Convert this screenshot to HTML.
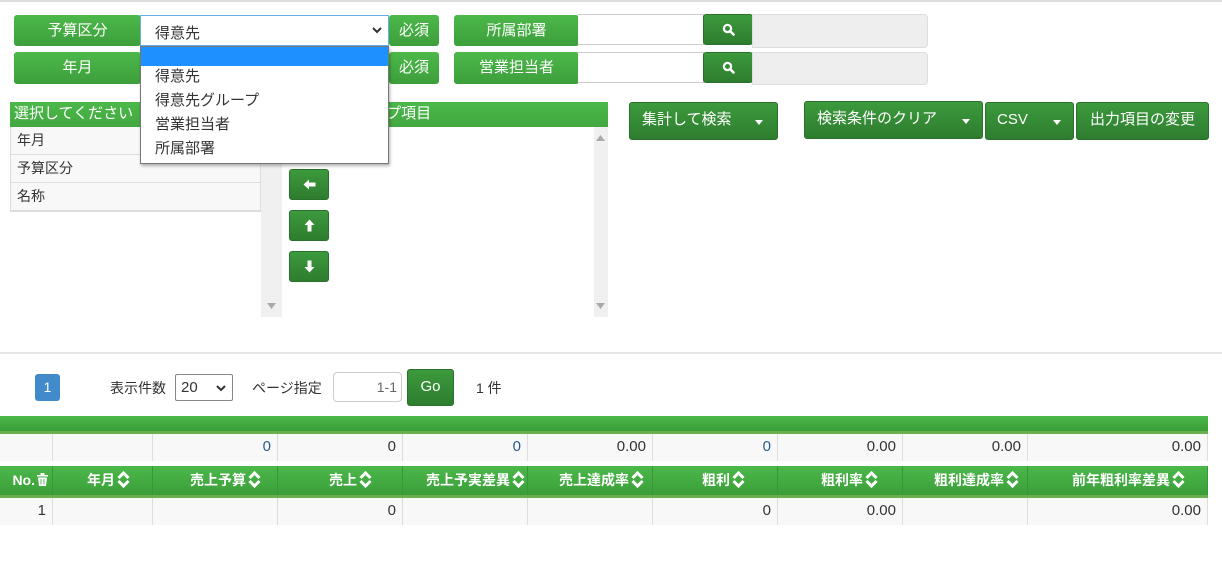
<!DOCTYPE html>
<html><head><meta charset="utf-8"><style>
*{box-sizing:border-box;margin:0;padding:0}
body{width:1222px;height:585px;background:#fff;font-family:"Liberation Sans","Noto Sans CJK JP",sans-serif;font-size:14px;color:#333;position:relative;overflow:hidden}
.a{position:absolute}
.g{background:linear-gradient(#4cb84a,#3d9f3b);color:#fff;text-align:center;border-radius:3px}
.b{background:linear-gradient(#3c9a3c,#2e7d2f);color:#fff;border-radius:3px;border:1px solid #2b702c}
.car{display:inline-block;width:0;height:0;border-left:4px solid transparent;border-right:4px solid transparent;border-top:5px solid #fff;vertical-align:middle}
.th{background:linear-gradient(#4cb84a,#3b9e39);border-bottom:3px solid #6aaf4c}
.cell{position:absolute;top:0;height:100%;border-right:1px solid #ddd;text-align:right;padding-right:6px}
.hc{position:absolute;top:0;height:100%;border-right:1px solid #3a963a;color:#fff;font-weight:bold;text-align:right;padding-right:22px;font-size:14px}
.sort{display:inline-block;vertical-align:middle;margin-left:2px;margin-top:-3px}
.b svg,.dd svg{display:block}
</style></head><body>
<div class="a" style="left:0;top:0;width:1222px;height:2px;background:#ddd"></div>

<div class="a g" style="left:14px;top:15px;width:127px;height:31px;line-height:31px;font-size:15px">予算区分</div>
<div class="a" style="left:140px;top:15px;width:249px;height:31px;border:1px solid #66afe9;background:#fff;padding:6px 14px;font-size:15px">得意先<svg style="position:absolute;right:6px;top:11px" width="10" height="7" viewBox="0 0 10 7"><path d="M1 1L5 5L9 1" stroke="#333" stroke-width="2" fill="none"/></svg></div>
<div class="a g" style="left:389px;top:15px;width:50px;height:31px;line-height:31px;font-size:15px">必須</div>
<div class="a g" style="left:14px;top:52px;width:127px;height:32px;line-height:32px;font-size:15px">年月</div>
<div class="a g" style="left:389px;top:52px;width:50px;height:32px;line-height:32px;font-size:15px">必須</div>

<div class="a g" style="left:454px;top:15px;width:125px;height:31px;line-height:31px;font-size:15px">所属部署</div>
<div class="a" style="left:578px;top:14px;width:126px;height:31px;border:1px solid #ccc;border-left:none;background:#fff"></div>
<div class="a b" style="left:703px;top:14px;width:50px;height:31px"><svg style="margin:8px auto 0" width="13" height="13" viewBox="0 0 13 13"><circle cx="5.5" cy="5.5" r="3.6" stroke="#fff" stroke-width="2.2" fill="none"/><path d="M8 8L11.5 11.5" stroke="#fff" stroke-width="2.6" stroke-linecap="round"/></svg></div>
<div class="a" style="left:752px;top:14px;width:176px;height:34px;background:#eee;border:1px solid #ddd;border-radius:0 4px 4px 0"></div>
<div class="a g" style="left:454px;top:52px;width:125px;height:32px;line-height:32px;font-size:15px">営業担当者</div>
<div class="a" style="left:578px;top:52px;width:126px;height:31px;border:1px solid #ccc;border-left:none;background:#fff"></div>
<div class="a b" style="left:703px;top:52px;width:50px;height:31px"><svg style="margin:8px auto 0" width="13" height="13" viewBox="0 0 13 13"><circle cx="5.5" cy="5.5" r="3.6" stroke="#fff" stroke-width="2.2" fill="none"/><path d="M8 8L11.5 11.5" stroke="#fff" stroke-width="2.6" stroke-linecap="round"/></svg></div>
<div class="a" style="left:752px;top:52px;width:176px;height:33px;background:#eee;border:1px solid #ddd;border-radius:0 4px 4px 0"></div>

<!-- panel -->
<div class="a" style="left:10px;top:102px;width:598px;height:25px;background:linear-gradient(#4cb84a,#42a840);color:#fff;font-size:15px;line-height:24px;padding-left:4px">選択してください<span style="position:absolute;left:332px">グループ項目</span></div>
<div class="a" style="left:10px;top:127px;width:251px;height:85px;border:1px solid #ddd;border-top:none;border-bottom:2px solid #ddd;background:#f8f8f8">
<div style="height:28px;line-height:26px;padding-left:6px;border-bottom:1px solid #ddd">年月</div>
<div style="height:28px;line-height:26px;padding-left:6px;border-bottom:1px solid #ddd">予算区分</div>
<div style="height:27px;line-height:26px;padding-left:6px">名称</div></div>
<div class="a" style="left:261px;top:127px;width:21px;height:190px;background:#f0f0f0"><svg style="position:absolute;bottom:8px;left:6px" width="9" height="6"><path d="M0 0H9L4.5 6Z" fill="#aaa"/></svg></div>
<div class="a" style="left:594px;top:127px;width:14px;height:190px;background:#f0f0f0"><svg style="position:absolute;top:8px;left:2px" width="9" height="6"><path d="M0 6H9L4.5 0Z" fill="#aaa"/></svg><svg style="position:absolute;bottom:8px;left:2px" width="9" height="6"><path d="M0 0H9L4.5 6Z" fill="#aaa"/></svg></div>
<div class="a b" style="left:289px;top:169px;width:40px;height:31px"><svg style="margin:9px auto 0" width="13" height="11" viewBox="0 0 13 11"><path d="M0.5 5.5L6 0.5V3.5H12.5V7.5H6V10.5Z" fill="#fff"/></svg></div>
<div class="a b" style="left:289px;top:210px;width:40px;height:31px"><svg style="margin:8px auto 0" width="11" height="13" viewBox="0 0 11 13"><path d="M5.5 0.5L10.5 6H7.5V12.5H3.5V6H0.5Z" fill="#fff"/></svg></div>
<div class="a b" style="left:289px;top:251px;width:40px;height:31px"><svg style="margin:8px auto 0" width="11" height="13" viewBox="0 0 11 13"><path d="M5.5 12.5L10.5 7H7.5V0.5H3.5V7H0.5Z" fill="#fff"/></svg></div>

<!-- dropdown -->
<div class="a" style="left:140px;top:46px;width:249px;height:118px;background:#fff;border:1px solid #777;box-shadow:1px 2px 3px rgba(0,0,0,.3);font-size:15px">
<div style="height:19px;background:#1e90ff"></div>
<div style="padding-left:14px;line-height:24px;margin-top:-1px">得意先<br>得意先グループ<br>営業担当者<br>所属部署</div></div>

<!-- buttons -->
<div class="a b" style="left:629px;top:102px;width:149px;height:38px;line-height:34px;padding-left:12px;font-size:15px">集計して検索<span class="car" style="position:absolute;right:14px;top:17px"></span></div>
<div class="a b" style="left:804px;top:101px;width:179px;height:38px;line-height:34px;padding-left:12px;font-size:15px">検索条件のクリア<span class="car" style="position:absolute;right:12px;top:17px"></span></div>
<div class="a b" style="left:985px;top:102px;width:89px;height:38px;line-height:34px;padding-left:11px;font-size:15px">CSV<span class="car" style="position:absolute;right:12px;top:17px"></span></div>
<div class="a b" style="left:1076px;top:102px;width:133px;height:38px;line-height:34px;text-align:center;font-size:15px">出力項目の変更</div>

<div class="a" style="left:0;top:352px;width:1222px;height:2px;background:#e5e5e5"></div>

<div class="a" style="left:35px;top:374px;width:25px;height:27px;background:#428bca;border-radius:3px;color:#fff;text-align:center;line-height:26px">1</div>
<div class="a" style="left:110px;top:378px">表示件数</div>
<div class="a" style="left:175px;top:374px;width:58px;height:27px;border:1px solid #888;border-radius:2px;padding:4px 5px;font-size:15px">20<svg style="position:absolute;right:6px;top:10px" width="10" height="7" viewBox="0 0 10 7"><path d="M1 1L5 5L9 1" stroke="#333" stroke-width="2" fill="none"/></svg></div>
<div class="a" style="left:252px;top:378px">ページ指定</div>
<div class="a" style="left:333px;top:372px;width:69px;height:30px;border:1px solid #ccc;border-radius:4px;text-align:right;padding-right:4px;line-height:28px;color:#666">1-1</div>
<div class="a b" style="left:407px;top:369px;width:47px;height:37px;text-align:center;line-height:34px;font-size:15px">Go</div>
<div class="a" style="left:476px;top:378px">1 件</div>

<!-- table1 -->
<div class="a th" style="left:0;top:416px;width:1208px;height:18px"></div>
<div class="a" style="left:0;top:434px;width:1208px;height:27px;background:#f8f8f8;line-height:26px;font-size:15px">
<div class="cell" style="left:0;width:53px"></div><div class="cell" style="left:53px;width:100px"></div>
<div class="cell" style="left:153px;width:125px;color:#2a5b8c">0</div><div class="cell" style="left:278px;width:125px">0</div>
<div class="cell" style="left:403px;width:125px;color:#2a5b8c">0</div><div class="cell" style="left:528px;width:125px">0.00</div>
<div class="cell" style="left:653px;width:125px;color:#2a5b8c">0</div><div class="cell" style="left:778px;width:125px">0.00</div>
<div class="cell" style="left:903px;width:125px">0.00</div><div class="cell" style="left:1028px;width:180px">0.00</div></div>

<!-- table2 -->
<div class="a th" style="left:0;top:466px;width:1208px;height:32px;line-height:29px">
<div class="hc" style="left:0;width:53px;padding-right:4px">No.<svg class="sort" width="11" height="13" viewBox="0 0 11 13"><path d="M0 2H11V3.5H0Z M3.5 0H7.5V2H3.5Z M1 4.5H10L9 13H2Z" fill="#fff"/><path d="M4 6V11.5M7 6V11.5" stroke="#3d9f3b" stroke-width="0.8"/></svg></div>
<div class="hc" style="left:53px;width:100px">年月<svg class="sort" width="13" height="17" viewBox="0 0 13 17"><path d="M1.5 7L6.5 2L11.5 7M1.5 10L6.5 15L11.5 10" stroke="#fff" stroke-width="3" fill="none"/></svg></div>
<div class="hc" style="left:153px;width:125px;padding-right:16px">売上予算<svg class="sort" width="13" height="17" viewBox="0 0 13 17"><path d="M1.5 7L6.5 2L11.5 7M1.5 10L6.5 15L11.5 10" stroke="#fff" stroke-width="3" fill="none"/></svg></div>
<div class="hc" style="left:278px;width:125px;padding-right:30px">売上<svg class="sort" width="13" height="17" viewBox="0 0 13 17"><path d="M1.5 7L6.5 2L11.5 7M1.5 10L6.5 15L11.5 10" stroke="#fff" stroke-width="3" fill="none"/></svg></div>
<div class="hc" style="left:403px;width:125px;padding-right:2px">売上予実差異<svg class="sort" width="13" height="17" viewBox="0 0 13 17"><path d="M1.5 7L6.5 2L11.5 7M1.5 10L6.5 15L11.5 10" stroke="#fff" stroke-width="3" fill="none"/></svg></div>
<div class="hc" style="left:528px;width:125px;padding-right:8px">売上達成率<svg class="sort" width="13" height="17" viewBox="0 0 13 17"><path d="M1.5 7L6.5 2L11.5 7M1.5 10L6.5 15L11.5 10" stroke="#fff" stroke-width="3" fill="none"/></svg></div>
<div class="hc" style="left:653px;width:125px;padding-right:32px">粗利<svg class="sort" width="13" height="17" viewBox="0 0 13 17"><path d="M1.5 7L6.5 2L11.5 7M1.5 10L6.5 15L11.5 10" stroke="#fff" stroke-width="3" fill="none"/></svg></div>
<div class="hc" style="left:778px;width:125px;padding-right:24px">粗利率<svg class="sort" width="13" height="17" viewBox="0 0 13 17"><path d="M1.5 7L6.5 2L11.5 7M1.5 10L6.5 15L11.5 10" stroke="#fff" stroke-width="3" fill="none"/></svg></div>
<div class="hc" style="left:903px;width:125px;padding-right:8px">粗利達成率<svg class="sort" width="13" height="17" viewBox="0 0 13 17"><path d="M1.5 7L6.5 2L11.5 7M1.5 10L6.5 15L11.5 10" stroke="#fff" stroke-width="3" fill="none"/></svg></div>
<div class="hc" style="left:1028px;width:180px;padding-right:22px">前年粗利率差異<svg class="sort" width="13" height="17" viewBox="0 0 13 17"><path d="M1.5 7L6.5 2L11.5 7M1.5 10L6.5 15L11.5 10" stroke="#fff" stroke-width="3" fill="none"/></svg></div></div>
<div class="a" style="left:0;top:498px;width:1208px;height:27px;background:#f8f8f8;line-height:26px;font-size:15px">
<div class="cell" style="left:0;width:53px">1</div><div class="cell" style="left:53px;width:100px"></div>
<div class="cell" style="left:153px;width:125px"></div><div class="cell" style="left:278px;width:125px">0</div>
<div class="cell" style="left:403px;width:125px"></div><div class="cell" style="left:528px;width:125px"></div>
<div class="cell" style="left:653px;width:125px">0</div><div class="cell" style="left:778px;width:125px">0.00</div>
<div class="cell" style="left:903px;width:125px"></div><div class="cell" style="left:1028px;width:180px">0.00</div></div>
</body></html>
